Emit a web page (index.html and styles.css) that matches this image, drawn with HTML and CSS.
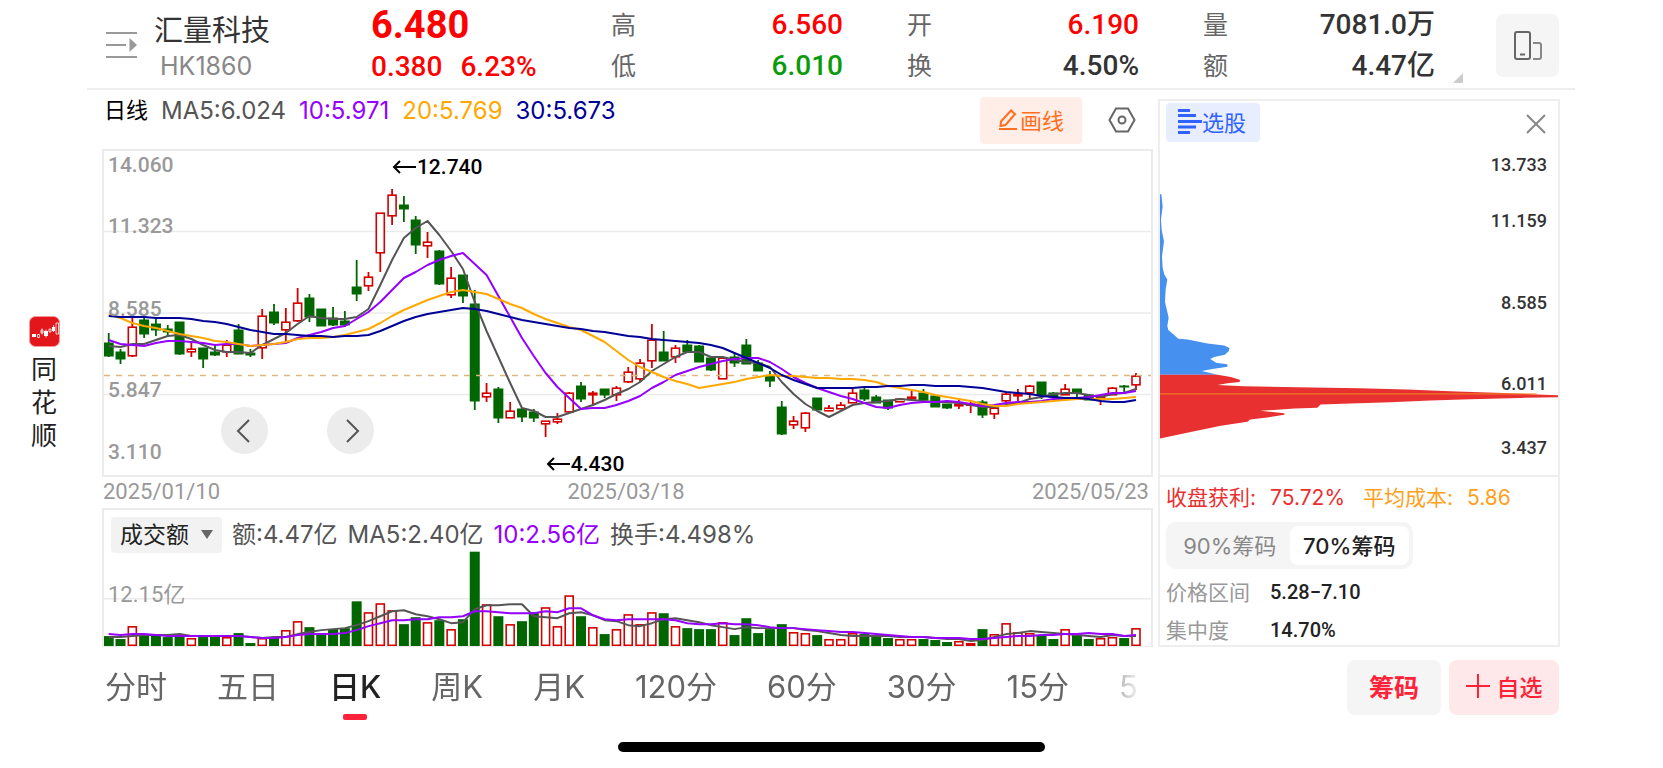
FILE: index.html
```html
<!DOCTYPE html>
<html lang="zh-CN">
    <head>
        <meta charset="utf-8">
        <title>汇量科技 HK1860</title>
        <link rel="stylesheet" href="styles.css">
    </head>
    <body>
        <div class="app">
            <aside class="side">
                <svg class="logo" viewBox="0 0 31 31">
                    <rect x="0.5" y="0.5" width="30" height="30" rx="6" fill="#e3171b" stroke="#f59a9a"/>
                    <path d="M3 18h4v3H3zM15 15h4v5h-4zM23 11h3v4h-3z" fill="#fff"/>
                    <path d="M8.5 18.500h2v3h-2zM12 14h2v3h-2zM20 13h2v3h-2zM27 7h2.500v11H27zM17 13.500v8M24.500 9v7M13 12.500v6" fill="none" stroke="#fff" stroke-width="0.8"/>
                </svg>
                <div class="brand">同<br>花<br>顺</div>
            </aside>
            <div class="main">
                <header class="header">
                    <div class="stock">
                        <svg class="menu" viewBox="0 0 31 28">
                            <path d="M0 2h31M0 14h20M0 26h31" stroke="#999" stroke-width="2"/>
                            <path d="M23.500 7l7.500 7-7.500 7z" fill="#999"/>
                        </svg>
                        <div>
                            <div class="name">汇量科技</div>
                            <div class="code">HK1860</div>
                        </div>
                    </div>
                    <div class="price">
                        <div class="now">6.480</div>
                        <div class="change"><span>0.380</span><span>6.23%</span></div>
                    </div>
                    <dl class="stats">
                        <div><dt>高</dt><dd class="up">6.560</dd></div>
                        <div><dt>开</dt><dd class="up">6.190</dd></div>
                        <div><dt>量</dt><dd>7081.0万</dd></div>
                        <div><dt>低</dt><dd class="down">6.010</dd></div>
                        <div><dt>换</dt><dd>4.50%</dd></div>
                        <div><dt>额</dt><dd>4.47亿</dd></div>
                    </dl>
                    <button class="rotate" aria-label="竖屏">
                        <svg width="28" height="30" viewBox="0 0 28 30" fill="none" stroke="#666" stroke-width="2">
                            <rect x="1" y="1" width="15" height="27" rx="2"/>
                            <path d="M6 23.500h5"/>
                            <path d="M19 12h6q2 0 2 2v12q0 2-2 2h-6" stroke="#888"/>
                        </svg>
                    </button>
                </header>

                <div class="content">
                    <div class="left">
                        <div class="toolbar">
                            <div class="ma">
                                <span class="period">日线</span>
                                <span>MA5:6.024</span>
                                <span class="c10">10:5.971</span>
                                <span class="c20">20:5.769</span>
                                <span class="c30">30:5.673</span>
                            </div>
                            <button class="draw">
                                <svg width="20" height="22" viewBox="0 0 20 22" fill="none" stroke="#ff6f1f" stroke-width="2">
                                    <path d="M3 13.500L13 2.500l4 3.500L7.500 17 2.500 18zM1 21h18"/>
                                </svg>画线
                            </button>
                            <button class="setting" aria-label="设置">
                                <svg width="28" height="26" viewBox="0 0 28 26" fill="none" stroke="#666" stroke-width="2">
                                    <path d="M8 1.500h12L26.500 13 20 24.500H8L1.500 13z"/>
                                    <circle cx="14" cy="13" r="3.500"/>
                                </svg>
                            </button>
                        </div>

                        <div class="kline">
                            <svg id="kline" viewBox="0 0 1047 324" preserveAspectRatio="none"></svg>
                            <span class="tick t1">14.060</span>
                            <span class="tick t2">11.323</span>
                            <span class="tick t3">8.585</span>
                            <span class="tick t4">5.847</span>
                            <span class="tick t5">3.110</span>
                            <span class="mark high"><svg width="24" height="14" viewBox="0 0 24 14"><path d="M24 7H2M8 1L2 7l6 6"/></svg>12.740</span>
                            <span class="mark low"><svg width="24" height="14" viewBox="0 0 24 14"><path d="M24 7H2M8 1L2 7l6 6"/></svg>4.430</span>
                            <button class="move prev" aria-label="向左"><svg width="18" height="24" viewBox="0 0 18 24"><path d="M13 1L2 12l11 11"/></svg></button>
                            <button class="move next" aria-label="向右"><svg width="18" height="24" viewBox="0 0 18 24"><path d="M5 1l11 11L5 23"/></svg></button>
                        </div>
                        <div class="dates"><span>2025/01/10</span><span>2025/03/18</span><span>2025/05/23</span></div>

                        <div class="volume">
                            <svg id="volume" viewBox="0 0 1047 137" preserveAspectRatio="none"></svg>
                            <div class="vol_head">
                                <div class="picker">
                                    <select aria-label="指标"><option>成交额</option></select>
                                </div>
                                <span>额:4.47亿</span>
                                <span>MA5:2.40亿</span>
                                <span class="c10">10:2.56亿</span>
                                <span>换手:4.498%</span>
                            </div>
                            <span class="tick tv">12.15亿</span>
                        </div>
                    </div>

                    <div class="chips">
                        <div class="chips_head">
                            <button class="pick">
                                <svg width="24" height="25" viewBox="0 0 24 25"><path d="M0 1.500h12M0 6.500h18M0 12.500h24M0 18h18M0 23.500h12" stroke="#2f62ff" stroke-width="3"/></svg>选股
                            </button>
                            <button class="close" aria-label="关闭">
                                <svg width="20" height="20" viewBox="0 0 20 20"><path d="M1 1l18 18M19 1L1 19" stroke="#888" stroke-width="2"/></svg>
                            </button>
                        </div>
                        <div class="dist">
                            <svg viewBox="27 30 1197 978" preserveAspectRatio="none">
                                <polygon fill="#4690ef" points="27,163 31,163 35,200 30,240 32,270 39,305 33,350 35,385 40,405 49,420 44,450 42,487 53,535 49,560 52,572 68,585 82,598 110,600 170,612 220,618 236,626 234,635 222,646 190,653 178,659 196,670 229,675 230,682 180,690 153,695 200,706 27,706"/>
                                <polygon fill="#e93030" points="27,706 200,706 240,713 267,721 267,728 230,732 200,737 280,741 440,744 627,747 770,751 920,757 1060,761 1160,766 1224,768 1224,774 1110,776 960,780 840,784 720,789 600,793 510,796 500,806 432,808 328,815 401,822 401,827 350,835 298,841 290,848 210,860 130,876 27,898"/>
                                <path d="M27 764H1160" stroke="#f08a24" stroke-width="3"/>
                            </svg>
                            <span class="tick t1">13.733</span>
                            <span class="tick t2">11.159</span>
                            <span class="tick t3">8.585</span>
                            <span class="tick t4">6.011</span>
                            <span class="tick t5">3.437</span>
                        </div>
                        <div class="info">
                            <div class="cost">
                                <span class="win">收盘获利:</span><span class="win num">75.72%</span>
                                <span class="avg">平均成本:</span><span class="avg num">5.86</span>
                            </div>
                            <div class="seg">
                                <button>90%筹码</button>
                                <button class="on">70%筹码</button>
                            </div>
                            <dl class="range">
                                <dt>价格区间</dt><dd>5.28−7.10</dd>
                                <dt>集中度</dt><dd>14.70%</dd>
                            </dl>
                        </div>
                    </div>
                </div>

                <footer class="footer">
                    <nav class="tabs">
                        <a href="#">分时</a>
                        <a href="#">五日</a>
                        <a href="#" class="active">日K</a>
                        <a href="#">周K</a>
                        <a href="#">月K</a>
                        <a href="#">120分</a>
                        <a href="#">60分</a>
                        <a href="#">30分</a>
                        <a href="#">15分</a>
                        <a href="#">5</a>
                    </nav>
                    <button class="btn">筹码</button>
                    <button class="btn add"><svg width="24" height="24" viewBox="0 0 24 24"><path d="M12 0v24M0 12h24" stroke="#ff2238" stroke-width="2"/></svg>自选</button>
                </footer>
            </div>
        </div>
        <div class="home"></div>
        <script src="chart.js"></script>
    </body>
</html>
```
FILE: styles.css
```css
* { box-sizing: border-box; }
body { margin: 0; background: #fff; color: #555; font-family: Inter, "Noto Sans CJK SC", sans-serif; font-size: 22px; }
button { margin: 0; padding: 0; border: 0; background: none; font-family: inherit; font-size: 22px; color: inherit; cursor: pointer; }
a { color: inherit; text-decoration: none; }
dl, dd { margin: 0; }
svg { display: block; flex: none; }

.app { display: flex; }
.side { width: 87px; flex: none; padding: 316px 0 0 29px; }
.logo { width: 31px; height: 31px; }
.brand { margin-top: 6px; padding-left: 2px; font-size: 26px; line-height: 33px; color: #222; }
.main { flex: 1; min-width: 0; }

/* header */
.header { display: flex; height: 90px; margin-right: 88px; padding: 0 16px 0 19px; border-bottom: 2px solid #eee; }
.stock { display: flex; width: 265px; flex: none; }
.menu { width: 31px; height: 28px; margin: 31px 17px 0 0; }
.name { margin-top: 13px; font-size: 29px; line-height: 36px; color: #333; }
.code { padding-left: 6px; font-size: 25px; line-height: 34px; color: #888; }
.price { width: 240px; flex: none; padding-top: 4px; font-family: Roboto, "Noto Sans CJK SC", sans-serif; font-weight: 700; color: #f00; }
.now { font-size: 38px; line-height: 42px; }
.change { display: flex; gap: 18px; font-size: 28px; line-height: 42px; font-weight: 500; }
.stats { flex: 1; position: relative; display: grid; grid-template-columns: repeat(3, 1fr); grid-auto-rows: 41px; column-gap: 64px; padding-top: 4px; line-height: 42px; }
.stats div { display: flex; justify-content: space-between; }
.stats dt { font-size: 25px; color: #666; }
.stats dd { font-family: Roboto, "Noto Sans CJK SC", sans-serif; font-size: 28px; font-weight: 500; color: #333; }
.stats .up { color: #f00; }
.stats .down { color: #0a9b0a; }
.stats::after { content: ""; position: absolute; right: -28px; top: 73px; border-left: 10px solid transparent; border-bottom: 10px solid #ccc; }
.rotate { display: flex; align-items: center; justify-content: center; width: 63px; height: 63px; margin: 14px 0 0 61px; border-radius: 7px; background: #f5f5f5; }

/* charts */
.content { display: flex; gap: 5px; padding: 0 103px 0 15px; }
.left { flex: 1; min-width: 0; }
.toolbar { display: flex; height: 59px; }
.ma { flex: 1; display: flex; gap: 13px; padding-left: 2px; font-size: 24px; line-height: 42px; white-space: nowrap; }
.period { font-size: 22px; line-height: 40px; color: #000; }
.c10 { color: #9500ff; }
.c20 { color: #ffa800; }
.c30 { color: #000096; }
.draw { display: flex; align-items: center; justify-content: center; gap: 2px; width: 102px; height: 47px; margin-top: 7px; padding-bottom: 3px; border-radius: 4px; background: #ffeee8; color: #ff6f1f; }
.setting { margin: 1px 17px 0 26px; }

.kline { position: relative; height: 328px; border: 2px solid #ebebeb; }
.kline > svg, .volume > svg, .dist > svg { width: 100%; height: 100%; }
.tick { position: absolute; left: 4px; font-family: Roboto, "Noto Sans CJK SC", sans-serif; font-size: 21px; font-weight: 500; line-height: 24px; color: #999; }
.t1 { top: 2px; }
.t2 { top: 63px; }
.t3 { top: 146px; }
.t4 { top: 227px; }
.t5 { top: 289px; }
.mark { position: absolute; display: flex; align-items: center; gap: 1px; font-family: Roboto, sans-serif; font-size: 21px; font-weight: 500; line-height: 24px; color: #000; }
.mark svg { fill: none; stroke: #000; stroke-width: 2; }
.high { left: 27.5%; top: 4px; }
.low { left: 42.2%; top: 301px; }
.move { position: absolute; top: 256px; display: flex; align-items: center; justify-content: center; width: 47px; height: 47px; border-radius: 50%; background: #ececec; }
.move svg { fill: none; stroke: #555; stroke-width: 2; }
.prev { left: 117px; }
.next { left: 223px; }
.dates { display: flex; justify-content: space-between; height: 31px; padding: 0 4px 0 1px; font-family: Roboto, sans-serif; line-height: 30px; color: #999; }

.volume { position: relative; height: 139px; border: 2px solid #ebebeb; border-bottom-width: 1px; }
.vol_head { position: absolute; left: 7px; top: 6px; display: flex; gap: 10px; font-size: 24px; line-height: 37px; white-space: nowrap; }
.picker { position: relative; }
.picker select { appearance: none; width: 111px; height: 36px; padding: 0 0 0 9px; border: 0; border-radius: 4px; background: #f2f2f2; font: inherit; font-size: 23px; color: #222; }
.picker::after { content: ""; position: absolute; right: 9px; top: 14px; border: 6px solid transparent; border-top: 9px solid #666; border-bottom: 0; }
.tv { top: 73px; font-size: 22px; font-weight: 400; }

.grid { stroke: #ebebeb; stroke-width: 1.500; }
.line { fill: none; stroke-width: 2; stroke-linejoin: round; }

/* chip distribution */
.chips { width: 402px; flex: none; height: 548px; margin-top: 9px; border: 2px solid #eee; }
.chips_head { display: flex; justify-content: space-between; height: 49px; padding: 2px 12px 0 6px; }
.pick { display: flex; align-items: center; justify-content: center; width: 94px; height: 39px; padding: 0 2px 3px 0; border-radius: 4px; background: #e8eeff; color: #2f62ff; }
.close { height: 42px; }
.dist { position: relative; height: 327px; border-bottom: 2px solid #eee; }
.dist .tick { left: auto; right: 11px; font-size: 18px; color: #333; }
.dist .t1 { top: 3px; }
.dist .t2 { top: 59px; }
.dist .t3 { top: 141px; }
.dist .t4 { top: 222px; }
.dist .t5 { top: 286px; }
.info { padding: 0 6px; }
.cost { display: flex; font-size: 21px; line-height: 38px; padding-top: 2px; white-space: nowrap; }
.cost .num { margin: 0 18px 0 14px; }
.win { color: #e93030; }
.avg { color: #ffa020; }
.seg { display: flex; width: 247px; height: 47px; margin-top: 5px; padding: 4px; border-radius: 10px; background: #f5f5f5; }
.seg button { flex: 1; padding-bottom: 3px; border-radius: 8px; color: #888; }
.seg .on { background: #fff; color: #222; font-weight: 500; }
.range { display: grid; grid-template-columns: 104px 1fr; grid-auto-rows: 38px; margin-top: 4px; line-height: 39px; }
.range dt { font-size: 21px; color: #999; }
.range dd { font-family: Roboto, sans-serif; font-size: 20px; font-weight: 500; color: #222; }

/* footer */
.footer { display: flex; gap: 8px; height: 95px; padding: 13px 104px 0 18px; }
.tabs { flex: 1; min-width: 0; display: flex; gap: 50px; margin-right: 196px; overflow: hidden; font-size: 31px; line-height: 54px; white-space: nowrap; color: #666; -webkit-mask-image: linear-gradient(to right, #000 calc(100% - 50px), transparent); mask-image: linear-gradient(to right, #000 calc(100% - 50px), transparent); }
.tabs .active { position: relative; font-weight: 500; color: #222; }
.tabs .active::after { content: ""; position: absolute; left: 50%; top: 54px; width: 24px; height: 6px; margin-left: -12px; border-radius: 2px; background: #ff2238; }
.btn { display: flex; align-items: center; justify-content: center; gap: 7px; width: 94px; height: 55px; border-radius: 8px; background: #f5f5f5; color: #ff2238; font-size: 25px; font-weight: 700; padding-bottom: 3px; }
.btn.add { width: 110px; background: #ffe8ea; font-size: 23px; font-weight: 500; }
.home { width: 427px; height: 10px; margin: 0 auto; border-radius: 5px; background: #000; }
```
FILE: chart.js
```js
// each candle: up(1) / down(0), high, body top, body bottom, low, volume
var candles = [
    [0,182,192,205,206,10],[0,198,201,208,213,7],[1,165,176,205,206,20],[0,166,169,183,187,11],
    [0,166,173,179,185,11],[0,174,178,181,186,9],[0,171,171,203,204,11],[1,192,198,201,206,8],
    [0,197,197,208,217,9],[0,195,201,204,205,11],[1,189,194,201,206,9],[0,173,179,203,203,13],
    [0,198,202,204,206,3],[1,158,165,197,208,8],[0,153,161,172,174,9],[1,157,171,179,191,16],
    [1,137,152,170,171,25],[0,143,147,166,171,19],[0,158,158,175,175,13],[0,156,167,174,175,17],
    [0,160,170,174,176,18],[0,109,136,143,150,45],[1,121,126,135,140,34],[1,62,62,102,121,43],
    [1,38,44,65,74,36],[0,45,54,58,71,22],[0,65,69,94,103,29],[1,81,91,95,107,24],
    [0,99,100,133,134,26],[1,116,127,144,147,17],[0,124,124,145,152,27],[0,139,153,250,259,95],
    [1,232,242,246,251,42],[0,236,238,267,272,30],[1,251,260,267,267,22],[0,257,258,266,271,25],
    [0,258,261,267,271,34],[1,270,270,273,286,39],[1,262,268,271,273,20],[1,241,242,261,262,51],
    [0,231,235,248,251,30],[1,240,242,244,255,19],[0,238,238,244,247,12],[1,235,237,244,250,17],
    [1,216,221,231,232,32],[1,208,212,228,231,22],[1,173,189,210,217,34],[0,180,201,210,210,33],
    [1,194,197,206,212,20],[0,189,194,201,201,18],[0,194,195,211,211,17],[0,206,207,219,220,17],
    [1,205,207,228,228,24],[0,202,206,212,216,11],[0,188,194,213,213,28],[0,209,212,220,220,13],
    [0,220,225,230,236,17],[0,250,256,283,284,22],[1,265,270,274,278,14],[1,261,262,277,281,13],
    [0,247,247,259,259,11],[1,254,257,260,260,7],[1,251,254,258,258,7],[1,236,242,252,252,13],
    [0,236,239,248,250,12],[0,244,246,252,252,10],[0,249,249,257,259,8],[1,247,248,251,251,7],
    [1,240,246,248,248,7],[0,238,242,249,249,7],[0,245,245,256,256,6],[0,253,253,257,258,4],
    [1,249,253,255,258,5],[1,251,253,254,262,3],[0,249,251,264,267,17],[1,256,257,263,268,12],
    [1,242,243,250,251,23],[1,238,243,245,250,14],[1,234,235,242,247,13],[0,231,231,244,248,11],
    [0,241,242,246,248,7],[1,233,238,244,244,17],[0,238,238,242,246,11],[0,243,244,249,249,7],
    [1,244,246,247,254,8],[1,236,237,244,244,9],[0,234,235,236,242,8],[1,222,225,234,239,18]
];

var ma5 = [195,196,193,193,189,185,184,188,194,199,201,201,202,194,188,182,173,165,167,168,168,166,158,134,109,87,77,70,84,100,118,151,180,206,232,257,260,266,266,262,258,254,249,243,238,231,220,213,206,201,201,206,206,209,211,212,216,231,243,253,260,266,260,254,252,251,250,248,249,250,251,251,252,254,256,256,254,252,248,246,243,242,242,244,246,243,242,238];
var ma10 = [189,193,194,195,192,190,190,191,192,194,193,193,195,194,193,192,187,184,181,177,175,168,161,151,139,127,121,114,109,105,102,113,124,145,166,187,205,222,236,247,258,257,257,254,250,245,237,231,224,220,216,213,210,208,207,207,211,218,226,232,237,241,245,248,252,256,257,254,252,251,251,250,251,253,255,254,252,251,251,250,248,248,247,246,244,242,242,240];
var ma20 = [163,167,172,175,177,180,183,185,187,190,191,193,195,194,193,191,188,187,187,186,184,181,178,172,165,159,154,149,145,141,139,141,143,148,153,157,163,168,172,176,179,185,191,200,209,216,221,226,230,233,237,235,233,231,228,226,224,225,225,226,227,227,228,228,229,231,235,237,239,241,244,246,248,250,253,255,255,253,252,251,250,249,248,248,248,248,247,246];
var ma30 = [165,166,166,166,167,167,167,168,170,171,173,176,179,181,183,183,184,185,185,186,185,185,184,180,175,170,166,163,161,159,157,158,160,163,166,169,171,173,175,177,178,180,181,183,185,186,188,189,190,191,192,194,197,202,207,212,217,224,229,233,237,237,237,237,236,236,235,235,234,234,235,235,235,236,237,239,241,242,243,245,246,247,247,248,250,251,251,249];
var vol5 = [9,9,10,11,11,11,12,10,10,10,10,10,9,8,9,9,12,14,16,17,18,21,25,30,35,36,32,30,27,23,24,37,41,41,42,42,30,29,28,33,34,31,26,25,21,20,23,27,28,26,24,21,19,17,19,18,18,18,18,16,15,13,11,10,10,10,10,9,9,9,8,7,7,5,6,9,12,13,15,14,13,12,11,10,9,11,10,10];
var vol10 = [12,11,12,12,11,10,10,10,10,10,10,10,9,8,8,9,11,12,12,12,13,16,20,23,26,26,27,27,29,29,30,35,35,34,33,33,33,35,34,38,38,31,27,26,27,27,27,27,26,23,22,22,23,22,22,21,19,18,18,17,16,15,14,14,13,12,11,10,9,9,8,8,8,7,7,8,9,10,10,11,11,12,12,13,12,12,10,11];

var RED = '#d40000', GREEN = '#006600', BASE = 137;

function x(i) { return 4.7 + i * 11.808; }

function rect(i, y, h, up) {
    if (up) {
        return '<rect x="' + (x(i) - 4) + '" y="' + (y + 0.7) + '" width="8" height="' + Math.max(h - 1.4, 1) + '" fill="#fff" stroke="' + RED + '" stroke-width="1.6"/>';
    }
    return '<rect x="' + (x(i) - 5) + '" y="' + y + '" width="10" height="' + h + '" fill="' + GREEN + '"/>';
}

function line(data, color) {
    var pts = data.map(function (y, i) { return x(i) + ',' + y; });
    return '<polyline class="line" stroke="' + color + '" points="' + pts.join(' ') + '"/>';
}

function grid(y) { return '<path class="grid" d="M0 ' + y + 'H1047"/>'; }

var k = grid(80.5) + grid(162) + grid(243.5);
var v = grid(89.5);
candles.forEach(function (c, i) {
    k += '<path d="M' + x(i) + ' ' + c[1] + 'V' + c[4] + '" stroke="' + (c[0] ? RED : GREEN) + '" stroke-width="1.8"/>';
    k += rect(i, c[2] - 0.5, c[3] - c[2] + 1, c[0]);
    v += rect(i, BASE - c[5], c[5], c[0]);
});
k += '<path d="M0 224.5H1047" stroke="#dcb880" stroke-width="1.5" stroke-dasharray="6 6"/>';
k += line(ma5, '#555') + line(ma10, '#9500ff') + line(ma20, '#ffa800') + line(ma30, '#000096');

function flip(h) { return BASE - h; }
v += line(vol5.map(flip), '#555') + line(vol10.map(flip), '#9500ff');

document.getElementById('kline').innerHTML = k;
document.getElementById('volume').innerHTML = v;
```
